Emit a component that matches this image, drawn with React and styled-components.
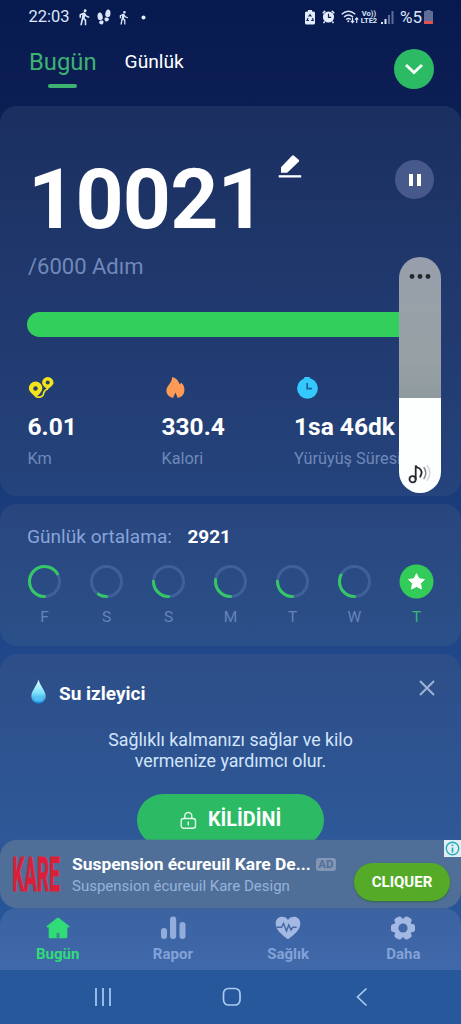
import React from 'react';
import styled, { createGlobalStyle } from 'styled-components';
import { MdDirectionsWalk } from 'react-icons/md';
import { IoFootsteps } from 'react-icons/io5';

const GlobalStyle = createGlobalStyle`
  * { box-sizing: border-box; }
  body { margin: 0; font-family: Roboto, "Noto Sans", sans-serif; background: #081b50; }
  svg { display: block; flex: none; }
  button { font-family: inherit; border: 0; padding: 0; color: inherit; background: none; }
`;

const Screen = styled.div`
  position: relative;
  width: 461px;
  height: 1024px;
  overflow: hidden;
  display: flex;
  flex-direction: column;
  background: linear-gradient(#071a50 0, #0b1d52 80px, #112a63 260px, #1b3c7a 500px, #20478a 650px, #255297 850px, #27589c 970px, #27589c 100%);
`;

const Text = styled.span`
  display: block;
  white-space: nowrap;
  font-size: ${(p) => p.$size}px;
  line-height: ${(p) => p.$line}px;
  font-weight: ${(p) => p.$weight || 400};
  letter-spacing: ${(p) => p.$track || 0}px;
  color: ${(p) => p.$color || '#fff'};
`;

const StatusBar = styled.header`
  height: 34px;
  padding: 0 28px 0 28.5px;
  display: flex;
  align-items: center;
  color: #dbe6fb;
`;
const Spacer = styled.div`
  flex: 1;
`;
const Inline = styled.div`
  display: flex;
  align-items: center;
  height: 20px;
  margin-left: ${(p) => p.$left || 0}px;
  margin-top: ${(p) => p.$top || 0}px;
`;
const Network = styled.div`
  display: flex;
  flex-direction: column;
  align-items: center;
  width: 18px;
  margin-right: 3px;
`;

const Tabs = styled.nav`
  height: 72px;
  display: flex;
  align-items: flex-start;
  padding: 12px 27px 0 29px;
`;
const Tab = styled.div`
  display: flex;
  flex-direction: column;
  align-items: center;
  margin-right: 28px;
`;
const TabLine = styled.i`
  width: 29px;
  height: 4px;
  margin-top: 6px;
  border-radius: 2px;
  background: #3cb371;
`;
const RoundButton = styled.button`
  width: ${(p) => p.$size}px;
  height: ${(p) => p.$size}px;
  flex: none;
  border-radius: 50%;
  display: flex;
  align-items: center;
  justify-content: center;
  background: ${(p) => p.$bg};
  margin-top: ${(p) => p.$top}px;
`;

const Card = styled.section`
  flex: none;
  height: ${(p) => p.$height}px;
  margin-bottom: 8px;
  border-radius: 17px;
  background: linear-gradient(${(p) => p.$from}, ${(p) => p.$to});
`;

const StepRow = styled.div`
  height: 136px;
  padding: 50px 27px 0 28px;
  display: flex;
  align-items: flex-start;
`;
const Goal = styled.div`
  padding: 19px 28px 0;
`;
const Progress = styled.div`
  height: 25px;
  margin: 39px 27px 0;
  border-radius: 13px;
  background: #33cf5c;
`;
const Stats = styled.div`
  display: grid;
  grid-template-columns: 134px 132.5px 1fr;
  padding: 40px 0 0 27.5px;
`;
const Stat = styled.div`
  display: flex;
  flex-direction: column;
`;
const StatIcon = styled.div`
  margin-bottom: 11px;
`;

const Average = styled.div`
  display: flex;
  gap: 15.5px;
  padding: 21px 27px 0;
`;
const Week = styled.div`
  display: flex;
  justify-content: space-between;
  padding: 15px 27px 0;
`;
const Day = styled.div`
  width: 35px;
  display: flex;
  flex-direction: column;
  align-items: center;
  gap: 10px;
`;

const WaterHead = styled.div`
  display: flex;
  align-items: flex-start;
  padding: 25px 26px 0 30px;
  height: 75px;
`;
const Water = styled.div`
  display: flex;
  flex-direction: column;
  align-items: center;
`;
const Unlock = styled.button`
  display: flex;
  align-items: center;
  gap: 11px;
  width: 187px;
  height: 52px;
  padding-left: 43px;
  margin: 23px auto 0;
  border-radius: 26px;
  background: #2dba65;
`;

const Ad = styled.aside`
  position: relative;
  flex: none;
  display: flex;
  height: 68px;
  margin-top: -28px;
  padding: 0 11px 0 12px;
  border-radius: 17px 0 17px 17px;
  background: #506f98;
  box-shadow: 0 0 2px #46658e;
`;
const Logo = styled.div`
  width: 48px;
  height: 36px;
  margin: 16px 12px 0 0;
  display: flex;
  align-items: center;
  justify-content: center;
  & > span {
    transform: scale(0.95, 2.45);
    -webkit-text-stroke: 0.4px #dc1f38;
  }
`;
const AdCopy = styled.div`
  padding-top: 14px;
  flex: 1;
`;
const AdTitle = styled.div`
  display: flex;
  align-items: center;
  gap: 5px;
`;
const AdTag = styled.span`
  width: 20px;
  height: 13px;
  border-radius: 3px;
  background: #8396b4;
  color: #506f98;
  font: 700 11.5px/13px Roboto, sans-serif;
  text-align: center;
`;
const AdButton = styled.button`
  width: 96px;
  height: 38px;
  margin-top: 23px;
  border-radius: 19px;
  background: #55ab27;
  box-shadow: 0 1px 2px #35654a;
`;
const AdInfo = styled.div`
  position: absolute;
  top: 0;
  right: 0;
  width: 17px;
  height: 17px;
  background: #e3eef4;
`;

const BottomNav = styled.nav`
  flex: none;
  height: 62px;
  display: grid;
  grid-template-columns: repeat(4, 1fr);
  border-radius: 17px 17px 0 0;
  background: linear-gradient(#3b62a1, #4069ab);
`;
const NavItem = styled.div`
  display: flex;
  flex-direction: column;
  align-items: center;
  padding-top: 7px;
`;
const SystemNav = styled.nav`
  flex: 1;
  display: flex;
  gap: 109px;
  padding: 17px 0 0 93px;
  background: #27589c;
`;

const Volume = styled.div`
  position: absolute;
  left: 399px;
  top: 257px;
  width: 41.5px;
  height: 236px;
  border-radius: 21px;
  display: flex;
  flex-direction: column;
  align-items: center;
  justify-content: space-between;
  padding: 16px 0 8px;
  background: linear-gradient(#989fac 0, #98a1a5 100px, #8f9a9f 141px, #fdfefe 141px);
`;

const BatterySaver = () => (
  <svg width="10" height="15" viewBox="0 0 10 15">
    <path d="M3 0h4v1.5h1.5Q10 1.5 10 3v10q0 1.500-1.500 1.500h-7Q0 14.500 0 13V3q0-1.500 1.500-1.500H3z" fill="#e3ecfc" />
    <path d="M3.600 6.600 5 4.600l1.400 2M7.500 8l.8 2.400H6.200M4 10.500H1.900L3 8" fill="none" stroke="#12265a" strokeWidth="1.100" />
  </svg>
);
const Alarm = () => (
  <svg width="13" height="14" viewBox="0 0 13 14">
    <circle cx="6.500" cy="7" r="5.600" fill="#e3ecfc" />
    <path d="M.7 3.200 3.200.9M12.300 3.200 9.800.9M2.700 11.500l-1.200 1.600M10.300 11.500l1.200 1.600" stroke="#e3ecfc" strokeWidth="1.500" />
    <path d="M6.500 3.800v3.600h2.700" fill="none" stroke="#12265a" strokeWidth="1.200" />
  </svg>
);
const Wifi = () => (
  <svg width="18" height="14" viewBox="0 0 18 14" fill="none" stroke="#dbe6fb" strokeWidth="1.400">
    <path d="M.7 4.300Q7.500-1.700 14.300 4.300M3 7Q7.500 3 12 7M5.200 9.500Q7.500 7.500 9.800 9.500" />
    <circle cx="7.300" cy="11.300" r="1" fill="#dbe6fb" stroke="none" />
    <path d="M11.500 7.500v5M9.900 10.800l1.600 1.700 1.600-1.700M15.700 13V8M14.100 9.600l1.600-1.700 1.600 1.700" strokeWidth="1.200" />
  </svg>
);
const Signal = () => (
  <svg width="13" height="13" viewBox="0 0 13 13">
    <path d="M0 11h2v2H0zM3.500 8h2v5h-2z" fill="#dbe6fb" />
    <path d="M7 4h2v9H7zM10.500 0h2v13h-2z" fill="#5c6c98" />
  </svg>
);
const Battery = () => (
  <svg width="9" height="14" viewBox="0 0 9 14">
    <path d="M2.500 0h4v1H8q1 0 1 1v11q0 1-1 1H1q-1 0-1-1V2q0-1 1-1h1.500z" fill="#5f6d98" />
    <path d="M0 11h9v2q0 1-1 1H1q-1 0-1-1z" fill="#e3524d" />
  </svg>
);

const Pencil = () => (
  <svg width="24" height="24" viewBox="0 0 24 24" fill="#fff">
    <path d="M3 13.200 14 1.700q1-1 2 0l4.700 4.100q1 1 0 2L9.700 18.300q-.6.500-1.200.5H3z" />
    <path d="M.7 21.200h22.500v2.300H.7z" />
  </svg>
);
const Pins = () => (
  <svg width="26" height="22" viewBox="0 0 26 22">
    <path d="M8.500 20.200Q15 20.500 15.500 16.800T20 12" fill="none" stroke="#f4e51b" strokeWidth="1.700" />
    <path d="M8 20.700C4.500 17 .9 14.700.9 11.300a6.700 6.700 0 0 1 13.400 0c0 3.400-3 5.700-6.300 9.400zM19.500 12.600c-2.700-2.500-5.400-4.300-5.400-6.800a5.700 5.700 0 0 1 11.400 0c0 2.500-3.300 4.300-6 6.800z" fill="#f4e51b" />
    <circle cx="7.500" cy="11.500" r="2.200" fill="#243f70" />
    <circle cx="19.700" cy="5.500" r="2" fill="#243f70" />
  </svg>
);
const Flame = () => (
  <svg width="26" height="22" viewBox="0 0 26 22">
    <path d="M10.200 0C14 1 16.500 3.500 17.600 7.200l1.800-1.400C21.700 8 22.500 10.500 22.400 13c0 4.300-2.700 7.500-6.700 7.900l-2.200-5.500-2.500 5.500C7.500 20.300 4.300 17.500 4.400 13.500c0-5 5.700-7.300 5.800-13.500z" fill="#fd9a55" />
  </svg>
);
const Stopwatch = () => (
  <svg width="26" height="22" viewBox="0 0 26 22">
    <path d="M10.300 0h5.400v2h-5.400z" fill="#33c9ff" />
    <circle cx="13.500" cy="11.300" r="10.400" fill="#33c9ff" />
    <path d="M13.200 6v5.700h4.800" fill="none" stroke="#1c6096" strokeWidth="1.700" />
  </svg>
);

const Ring = ({ value }) => {
  const c = 2 * Math.PI * 15;
  return (
    <svg width="35" height="35" viewBox="0 0 35 35" fill="none" strokeWidth="3">
      <circle cx="17.500" cy="17.500" r="15" stroke="#40609b" />
      <circle cx="17.500" cy="17.500" r="15" stroke="#35c766" strokeLinecap="round" strokeDasharray={`${c * value} ${c}`} transform="rotate(90 17.500 17.500)" />
    </svg>
  );
};
const StarDay = () => (
  <svg width="35" height="35" viewBox="0 0 35 35">
    <circle cx="17.500" cy="17.500" r="17" fill="#33cb59" />
    <path d="m17.500 9.700 2.400 5 5.600.8-4 3.900.9 5.600-4.900-2.600-4.900 2.600.9-5.600-4-3.900 5.600-.8z" fill="#fff" stroke="#fff" strokeWidth="1" strokeLinejoin="round" />
  </svg>
);
const Drop = () => (
  <svg width="17" height="26" viewBox="0 0 17 26">
    <defs>
      <linearGradient id="drop" x1="0" y1="0" x2="0" y2="1">
        <stop offset="0" stopColor="#e2fbff" />
        <stop offset=".55" stopColor="#7fe2fa" />
        <stop offset="1" stopColor="#128ce0" />
      </linearGradient>
    </defs>
    <path d="M8.500.5C10 6.500 15.700 12 15.700 17.300a7.200 7.200 0 0 1-14.400 0C1.300 12 7 6.500 8.500.5z" fill="url(#drop)" />
    <ellipse cx="8.500" cy="20" rx="4.500" ry="2.500" fill="#5cc6f4" opacity=".7" />
  </svg>
);
const Lock = () => (
  <svg width="17" height="18" viewBox="0 0 17 18" fill="none" stroke="#e5f8eb" strokeWidth="1.400">
    <rect x="1.200" y="7.500" width="14.300" height="9.800" rx="2.500" />
    <path d="M4.800 7.500V5a3.500 3.500 0 0 1 7 0v2.500M8.300 10.500v4" />
  </svg>
);
const Note = () => (
  <svg width="24" height="22" viewBox="0 0 24 22" fill="none" strokeLinecap="round">
    <circle cx="4.600" cy="16.200" r="3.100" stroke="#25282d" strokeWidth="1.800" />
    <path d="M7.700 16V2.500q.8 2 3.700 2.900 4 3 .8 8.400" stroke="#25282d" strokeWidth="1.800" />
    <path d="M16 4.500q3.600 5.300 0 11" stroke="#85898e" strokeWidth="1.500" />
    <path d="M19.300 2.500q5 7.300 0 14.800" stroke="#d5d8da" strokeWidth="1.500" />
  </svg>
);
const navIcons = {
  home: (
    <svg width="26" height="26" viewBox="0 0 26 26" fill="#31dc78">
      <path d="M12 2.900q1-.9 2 0l10.200 8.200q1 1-.5 1.300h-1.400v9.500q0 1.300-1.300 1.300H5q-1.300 0-1.300-1.300v-9.500H2.300q-1.500-.3-.5-1.300z" />
      <path d="M11.500 18.500q1.500-1.500 3 0v4.700h-3z" fill="#3c8b94" />
    </svg>
  ),
  chart: (
    <svg width="26" height="26" viewBox="0 0 26 26" fill="#92add9">
      <rect x="1" y="13" width="6" height="11" rx="3" />
      <rect x="10" y="1.500" width="6.200" height="22.500" rx="3" />
      <rect x="19.500" y="7" width="6" height="17" rx="3" />
    </svg>
  ),
  heart: (
    <svg width="26" height="26" viewBox="0 0 26 26">
      <path d="M13 24.200C6.500 19.500.7 14.800.7 8.500.7 4.300 3.700 1.700 7 1.700c2.500 0 4.700 1.200 6 3.200 1.300-2 3.500-3.200 6-3.200 3.300 0 6.300 2.600 6.300 6.800 0 6.300-5.800 11-12.300 15.700z" fill="#a3b9e3" />
      <path d="M1.500 12.300h5l2-3.800 3 7.500 2.300-6 2.200 5 1.700-2.700h4" fill="none" stroke="#4569a5" strokeWidth="1.500" />
    </svg>
  ),
  gear: (
    <svg width="26" height="26" viewBox="0 0 26 26" fill="#a3b9e3">
      <circle cx="13" cy="13" r="9.500" />
      {[0, 60, 120].map((angle) => (
        <rect key={angle} x="1" y="9" width="24" height="8" rx="2.500" transform={`rotate(${angle} 13 13)`} />
      ))}
      <circle cx="13" cy="13" r="4.600" fill="#4068a5" />
    </svg>
  ),
};

const stats = [
  { icon: <Pins />, value: '6.01', label: 'Km' },
  { icon: <Flame />, value: '330.4', label: 'Kalori' },
  { icon: <Stopwatch />, value: '1sa 46dk', label: 'Yürüyüş Süresi' },
];
const days = [['F', 0.66], ['S', 0.09], ['S', 0.25], ['M', 0.27], ['T', 0.25], ['W', 0.32], ['T', 1]];
const navItems = [['home', 'Bugün'], ['chart', 'Rapor'], ['heart', 'Sağlık'], ['gear', 'Daha']];

export default function App() {
  return (
    <Screen>
      <GlobalStyle />
      <StatusBar>
        <Text $size={16.5} $line={20} $color="#dbe6fb">22:03</Text>
        <Inline $left={5}><MdDirectionsWalk size={18} /></Inline>
        <Inline $left={3}><IoFootsteps size={16} /></Inline>
        <Inline $left={4}><MdDirectionsWalk size={15} /></Inline>
        <Inline $left={10}><svg width="5" height="5"><circle cx="2.500" cy="2.500" r="2" fill="#e8effd" /></svg></Inline>
        <Spacer />
        <Inline><BatterySaver /></Inline>
        <Inline $left={7}><Alarm /></Inline>
        <Inline $left={6}><Wifi /></Inline>
        <Inline $left={1}>
          <Network>
            <Text $size={7.5} $line={7} $weight={700} $color="#dbe6fb">Vo))</Text>
            <Text $size={7.5} $line={7} $weight={700} $color="#dbe6fb">LTE2</Text>
          </Network>
          <Signal />
        </Inline>
        <Inline $left={6}><Text $size={17} $line={20} $color="#dbe6fb">%5</Text></Inline>
        <Inline $left={2}><Battery /></Inline>
      </StatusBar>

      <Tabs>
        <Tab>
          <Text $size={23.8} $line={32} $color="#3cb371">Bugün</Text>
          <TabLine />
        </Tab>
        <Tab><Text $size={19.2} $line={32}>Günlük</Text></Tab>
        <Spacer />
        <RoundButton $size={40} $bg="#2dba65" $top={3} aria-label="Menu">
          <svg width="20" height="14" viewBox="0 0 20 14"><path d="M2 3 10 10.500 18 3" fill="none" stroke="#f3fff7" strokeWidth="3" /></svg>
        </RoundButton>
      </Tabs>

      <Card $height={390} $from="#1b2f60" $to="#25437c">
        <StepRow>
          <Text $size={84} $line={88} $weight={700} $track={-0.8}>10021</Text>
          <Inline $left={13}><Pencil /></Inline>
          <Spacer />
          <RoundButton $size={39} $bg="#47598a" $top={4} aria-label="Pause">
            <svg width="14" height="14"><path d="M1 1h4v12H1zM9 1h4v12H9z" fill="#fff" /></svg>
          </RoundButton>
        </StepRow>
        <Goal>
          <Text $size={22} $line={12} $color="#7189b8">/6000 Adım</Text>
        </Goal>
        <Progress />
        <Stats>
          {stats.map((s) => (
            <Stat key={s.label}>
              <StatIcon>{s.icon}</StatIcon>
              <Text $size={24.5} $line={34} $weight={700}>{s.value}</Text>
              <Text $size={16.3} $line={30} $color="#6f89b8">{s.label}</Text>
            </Stat>
          ))}
        </Stats>
      </Card>

      <Card $height={142} $from="#29457e" $to="#2b5089">
        <Average>
          <Text $size={19.1} $line={24} $color="#87a4da">Günlük ortalama:</Text>
          <Text $size={19} $line={24} $weight={700}>2921</Text>
        </Average>
        <Week>
          {days.map(([day, value], i) => (
            <Day key={i}>
              {value === 1 ? <StarDay /> : <Ring value={value} />}
              <Text $size={15.5} $line={16} $color={value === 1 ? '#36b66f' : '#6584bb'}>{day}</Text>
            </Day>
          ))}
        </Week>
      </Card>

      <Card $height={206} $from="#2d4e88" $to="#2e5999">
        <WaterHead>
          <Drop />
          <Inline $left={12} $top={5}><Text $size={19} $line={24} $weight={700}>Su izleyici</Text></Inline>
          <Spacer />
          <Inline $top={-1}>
            <svg width="16" height="16" viewBox="0 0 16 16"><path d="m1 1 14 14M15 1 1 15" stroke="#a0b3d5" strokeWidth="2" /></svg>
          </Inline>
        </WaterHead>
        <Water>
          <Text $size={17.8} $line={21} $color="#d2e5fb">Sağlıklı kalmanızı sağlar ve kilo</Text>
          <Text $size={17.8} $line={21} $color="#d2e5fb">vermenize yardımcı olur.</Text>
        </Water>
        <Unlock>
          <Lock />
          <Text $size={19.8} $line={24} $weight={700}>KİLİDİNİ</Text>
        </Unlock>
      </Card>

      <Ad>
        <Logo><Text $size={20} $line={20} $weight={700} $color="#dc1f38">KARE</Text></Logo>
        <AdCopy>
          <AdTitle>
            <Text $size={17.4} $line={20} $weight={700}>Suspension écureuil Kare De...</Text>
            <AdTag>AD</AdTag>
          </AdTitle>
          <Text $size={15} $line={24} $color="#97b1df">Suspension écureuil Kare Design</Text>
        </AdCopy>
        <AdButton><Text $size={15} $line={38} $weight={700}>CLIQUER</Text></AdButton>
        <AdInfo>
          <svg width="17" height="17" viewBox="0 0 17 17" fill="none" stroke="#22aeb9" strokeWidth="1.400">
            <circle cx="8.500" cy="8.500" r="6.200" /><path d="M8.500 7.500v5M8.500 4.500v1.500" strokeWidth="1.700" />
          </svg>
        </AdInfo>
      </Ad>

      <BottomNav>
        {navItems.map(([icon, label], i) => (
          <NavItem key={label}>
            {navIcons[icon]}
            <Text $size={15} $line={26} $weight={700} $color={i ? '#83a2d7' : '#31dc78'}>{label}</Text>
          </NavItem>
        ))}
      </BottomNav>
      <SystemNav>
        <svg width="20" height="20" viewBox="0 0 20 20"><path d="M3 1v18M10 1v18M17 1v18" stroke="#a9cbf2" strokeWidth="1.700" /></svg>
        <svg width="20" height="20" viewBox="0 0 20 20"><rect x="1.500" y="1.500" width="16.500" height="16.500" rx="5" fill="none" stroke="#a9cbf2" strokeWidth="1.700" /></svg>
        <svg width="20" height="20" viewBox="0 0 20 20"><path d="M15.500 1.500 6.500 10l9 8.500" fill="none" stroke="#a9cbf2" strokeWidth="1.700" /></svg>
      </SystemNav>

      <Volume>
        <svg width="22" height="7" fill="#25282d"><circle cx="3" cy="3.500" r="2.400" /><circle cx="11" cy="3.500" r="2.400" /><circle cx="19" cy="3.500" r="2.400" /></svg>
        <Note />
      </Volume>
    </Screen>
  );
}
